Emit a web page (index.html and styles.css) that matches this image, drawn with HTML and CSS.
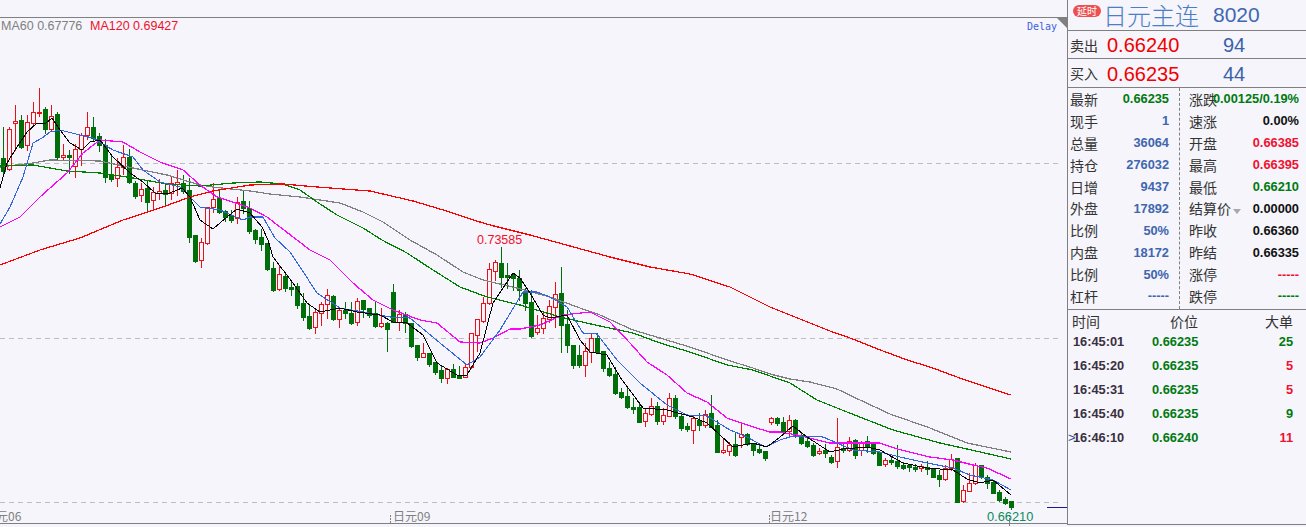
FILE: index.html
```html
<!DOCTYPE html>
<html lang="zh-CN">
<head>
<meta charset="utf-8">
<title>日元主连 8020</title>
<link rel="stylesheet" href="styles.css">
</head>
<body>
<div class="app">
  <section class="chart">
    <svg class="plot" id="plot" viewBox="0 0 1067 527" width="1067" height="527" xmlns="http://www.w3.org/2000/svg">
      <g class="rules">
        <line class="rule" x1="0" y1="17.5" x2="1067" y2="17.5"/>
        <line class="rule" x1="0" y1="523.5" x2="1067" y2="523.5"/>
        <line class="grid" x1="0" y1="163.5" x2="1061" y2="163.5"/>
        <line class="grid" x1="0" y1="338.5" x2="1061" y2="338.5"/>
        <line class="grid" x1="0" y1="502.5" x2="1061" y2="502.5"/>
        <line class="tick" x1="390.5" y1="515" x2="390.5" y2="523"/>
        <line class="tick" x1="769.5" y1="515" x2="769.5" y2="523"/>
        <line class="tick" x1="1009.5" y1="515" x2="1009.5" y2="527"/>
        <line class="navy" x1="1047" y1="507.5" x2="1067" y2="507.5"/>
        <polygon class="corner" points="1057,18 1067,18 1067,28"/>
      </g>
      <g id="candles"></g>
      <g id="lines" fill="none"></g>
      <text class="legend gray" x="1" y="30">MA60 0.67776</text>
      <text class="legend red" x="90" y="30">MA120 0.69427</text>
      <text class="delay" x="1027" y="30">Delay</text>
      <text class="legend red" x="477" y="244">0.73585</text>
      <text class="axis" x="-4" y="521">元06</text>
      <text class="axis" x="393" y="521">日元09</text>
      <text class="axis" x="770" y="521">日元12</text>
      <text class="axis-price" x="987" y="521">0.66210</text>
    </svg>
  </section>

  <aside class="panel">
    <header class="title">
      <span class="badge">延时</span>
      <span class="name">日元主连</span>
      <span class="code">8020</span>
    </header>
    <div class="quote">
      <span class="quote-label">卖出</span><span class="quote-price">0.66240</span><span class="quote-vol">94</span>
    </div>
    <div class="quote quote-tall">
      <span class="quote-label">买入</span><span class="quote-price">0.66235</span><span class="quote-vol">44</span>
    </div>
    <div class="stats">
      <div class="stats-col stats-left">
        <div class="stat"><span class="stat-label">最新</span><span class="num up">0.66235</span></div>
        <div class="stat"><span class="stat-label">现手</span><span class="num blue">1</span></div>
        <div class="stat"><span class="stat-label">总量</span><span class="num blue">36064</span></div>
        <div class="stat"><span class="stat-label">持仓</span><span class="num blue">276032</span></div>
        <div class="stat"><span class="stat-label">日增</span><span class="num blue">9437</span></div>
        <div class="stat"><span class="stat-label">外盘</span><span class="num blue">17892</span></div>
        <div class="stat"><span class="stat-label">比例</span><span class="num blue">50%</span></div>
        <div class="stat"><span class="stat-label">内盘</span><span class="num blue">18172</span></div>
        <div class="stat"><span class="stat-label">比例</span><span class="num blue">50%</span></div>
        <div class="stat"><span class="stat-label">杠杆</span><span class="num blue">-----</span></div>
      </div>
      <div class="stats-col stats-right">
        <div class="stat"><span class="stat-label tight">涨跌</span><span class="num up">0.00125/0.19%</span></div>
        <div class="stat"><span class="stat-label">速涨</span><span class="num ink">0.00%</span></div>
        <div class="stat"><span class="stat-label">开盘</span><span class="num down">0.66385</span></div>
        <div class="stat"><span class="stat-label">最高</span><span class="num down">0.66395</span></div>
        <div class="stat"><span class="stat-label">最低</span><span class="num up">0.66210</span></div>
        <div class="stat"><span class="stat-label">结算价<i class="caret"></i></span><span class="num ink">0.00000</span></div>
        <div class="stat"><span class="stat-label">昨收</span><span class="num ink">0.66360</span></div>
        <div class="stat"><span class="stat-label">昨结</span><span class="num ink">0.66335</span></div>
        <div class="stat"><span class="stat-label">涨停</span><span class="num down">-----</span></div>
        <div class="stat"><span class="stat-label">跌停</span><span class="num up">-----</span></div>
      </div>
    </div>
    <div class="trades">
      <div class="trade-head"><span>时间</span><span>价位</span><span>大单</span></div>
      <div class="trade"><span class="t-time">16:45:01</span><span class="t-price">0.66235</span><span class="t-vol up">25</span></div>
      <div class="trade"><span class="t-time">16:45:20</span><span class="t-price">0.66235</span><span class="t-vol down">5</span></div>
      <div class="trade"><span class="t-time">16:45:31</span><span class="t-price">0.66235</span><span class="t-vol down">5</span></div>
      <div class="trade"><span class="t-time">16:45:40</span><span class="t-price">0.66235</span><span class="t-vol up">9</span></div>
      <div class="trade current"><span class="t-time">16:46:10</span><span class="t-price">0.66240</span><span class="t-vol down">11</span></div>
    </div>
  </aside>
</div>
<script src="app.js"></script>
</body>
</html>
```
FILE: styles.css
```css
* { box-sizing: border-box; }
html, body { margin: 0; height: 100%; background: #f5f5fb; overflow: hidden; }
body { font-family: "Liberation Sans", "Noto Sans CJK SC", sans-serif; color: #222; }

.app { display: flex; width: 1306px; height: 527px; }
.chart { flex: 0 0 1067px; height: 527px; }
.plot { display: block; }

.rule { stroke: #808080; stroke-width: 1; }
.grid { stroke: #bdbdbd; stroke-width: 1; stroke-dasharray: 5 4; }
.tick { stroke: #808080; stroke-width: 1; stroke-dasharray: 2 1; }
.navy { stroke: #1a1a8c; stroke-width: 1; }
.corner { fill: #808080; }

.legend { font-family: "Liberation Sans", sans-serif; font-size: 12.5px; }
.legend.gray { fill: #808080; }
.legend.red { fill: #f0102c; }
.delay { font-family: "DejaVu Sans Mono", "Liberation Mono", monospace; font-size: 10px; fill: #3a62e0; }
.axis { font-family: "Noto Sans CJK SC", sans-serif; font-size: 12px; fill: #808080; }
.axis-price { font-family: "Liberation Sans", sans-serif; font-size: 12.8px; fill: #0b8a5a; }

.panel { flex: 0 0 239px; height: 525px; border-left: 1px solid #808080; border-bottom: 1px solid #808080; display: flex; flex-direction: column; }

.title { height: 31px; flex: none; border-bottom: 1px solid #808080; display: flex; align-items: flex-start; padding-left: 5px; }
.badge { width: 28px; height: 12px; margin-top: 5px; border-radius: 6px; background: #ee5050; color: #fff; font: 10px/12px "Noto Sans CJK SC", sans-serif; text-align: center; }
.name { margin-left: 2px; font: 300 24px/29px "Noto Sans CJK SC", sans-serif; color: #4a7fc4; }
.code { margin-left: 14px; font: 21px/29px "Liberation Sans", sans-serif; color: #4068b0; }

.quote { height: 28px; flex: none; border-bottom: 1px solid #808080; display: flex; align-items: center; padding: 2px 0 0 2px; }
.quote-tall { height: 29px; }
.quote-label { width: 37px; margin-top: -2px; font: 14px/20px "Noto Sans CJK SC", sans-serif; color: #333; }
.quote-price { width: 116px; font-size: 20px; color: #f00000; }
.quote-vol { font-size: 20px; color: #3a62a8; }

.stats { height: 222px; flex: none; border-bottom: 1px solid #808080; display: flex; }
.stats-col { display: flex; flex-direction: column; }
.stats-left { width: 112px; padding: 0 10px 0 2px; border-right: 1px dashed #808080; }
.stats-right { flex: 1; padding: 0 7px 0 9px; }
.stat { height: 21.9px; display: flex; align-items: center; white-space: nowrap; }
.stat-label { flex: none; font: 14px/20px "Noto Sans CJK SC", sans-serif; color: #333; }
.stat-label.tight { margin-right: -6px; }
.caret { display: inline-block; margin-left: 2px; border-style: solid; border-width: 5px 4.5px 0; border-color: #a8a8a8 transparent transparent; vertical-align: 0; }
.num { margin-left: auto; font-size: 12.8px; font-weight: 700; }
.up { color: #007a10; }
.down { color: #f01030; }
.blue { color: #3f66ae; }
.ink { color: #111; }

.trades { flex: 1; }
.trade-head { height: 19px; display: grid; grid-template-columns: 98px 95px 1fr; padding-left: 4px; font: 14px/22px "Noto Sans CJK SC", sans-serif; color: #333; }
.trade { height: 24px; display: grid; grid-template-columns: 79px 66px 1fr; align-items: center; padding-left: 5px; font-size: 12.8px; font-weight: 700; }
.t-time { color: #3a3040; }
.t-price { color: #007a10; }
.t-vol { justify-self: end; width: 38px; text-align: right; margin-right: 13px; }
.current { position: relative; }
.current::before { content: ">"; position: absolute; left: 0; font-weight: 400; color: #2a4fa0; }
```
FILE: app.js
```js
// [kind, bodyTop, bodyBottom, high, low]
const G = 0, R = 1;
const candles = [
[G,158,171,127,173],[R,129,169,127,170],[R,121,123,105,150],[G,120,147,115,148],[R,122,145,115,150],[R,112,123,102,124],[R,112,113,88,116],[G,109,129,107,133],[R,116,129,105,130],[G,114,157,112,159],
[R,155,157,144,160],[G,155,157,150,173],[R,149,166,144,177],[R,135,149,133,165],[R,127,135,112,139],[G,127,138,117,140],[G,136,145,133,151],[G,145,177,139,182],[G,175,179,154,181],[R,167,178,158,186],
[R,157,167,145,174],[G,157,182,149,183],[G,183,196,181,198],[R,189,195,183,201],[G,188,202,181,210],[R,192,200,187,208],[R,191,193,179,199],[G,190,194,183,204],[R,183,193,177,199],[R,182,184,170,195],
[G,183,191,175,193],[G,190,237,178,242],[G,235,261,235,262],[R,242,260,238,267],[R,207,243,207,244],[R,199,207,183,212],[G,198,212,190,213],[G,211,217,210,221],[G,215,220,210,222],[R,202,218,197,223],
[G,201,208,190,213],[G,208,231,201,233],[G,230,239,229,243],[G,237,244,229,250],[G,243,269,243,270],[G,268,290,262,291],[R,274,289,265,290],[G,276,288,272,291],[G,287,289,282,295],[G,286,305,283,308],
[G,303,317,293,320],[G,316,328,305,329],[R,312,327,308,333],[R,304,313,302,325],[R,295,304,289,318],[G,296,319,295,320],[R,310,319,307,327],[G,310,313,302,318],[G,313,323,302,324],[R,301,322,298,325],
[G,300,309,300,317],[G,308,315,308,317],[G,313,326,302,327],[R,323,326,308,327],[G,323,329,322,351],[G,292,322,284,322],[R,314,322,310,330],[G,314,323,312,332],[G,323,346,323,347],[G,345,357,345,360],
[R,353,357,343,357],[G,353,364,353,366],[G,362,372,362,374],[G,370,378,366,382],[R,369,378,368,383],[G,369,377,364,377],[G,376,378,366,378],[R,367,377,363,377],[R,333,367,333,368],[R,319,335,319,351],
[R,303,321,297,322],[R,269,303,263,304],[R,262,271,260,280],[G,263,277,247,287],[G,275,277,263,288],[G,275,278,273,290],[G,278,290,270,300],[G,293,303,288,310],[G,302,336,290,337],[R,328,332,315,334],
[R,318,328,313,333],[R,306,319,300,322],[R,294,307,282,327],[G,293,325,267,352],[G,324,345,310,352],[G,345,365,345,368],[G,355,365,345,367],[R,351,365,343,376],[R,338,352,333,362],[G,338,352,333,352],
[G,351,368,351,371],[G,368,375,362,376],[G,374,393,367,394],[G,392,397,388,398],[G,396,407,388,408],[G,407,409,398,413],[G,407,422,402,422],[R,413,421,408,426],[R,406,414,398,415],[G,406,421,402,424],
[R,415,421,408,424],[R,398,416,393,416],[G,398,416,395,418],[G,416,428,413,430],[G,426,429,423,431],[R,418,430,415,443],[G,420,425,413,430],[R,414,425,410,427],[G,413,427,395,427],[G,425,452,420,452],
[R,450,452,439,453],[R,445,451,442,455],[G,444,455,433,456],[R,434,437,423,447],[G,434,444,433,445],[G,443,450,443,455],[G,449,452,443,453],[G,451,458,451,460],[R,418,422,417,424],[G,418,423,417,425],
[G,422,432,417,433],[R,420,431,415,435],[G,420,435,419,437],[G,435,443,433,444],[G,441,446,438,447],[G,445,455,443,456],[R,451,453,448,454],[G,450,453,444,457],[G,457,462,455,463],[R,447,461,418,467],
[G,448,450,443,452],[R,441,450,437,451],[G,440,455,439,458],[R,442,450,441,455],[G,441,447,436,452],[G,444,453,443,454],[G,452,465,452,465],[R,460,464,458,466],[G,460,462,457,464],[G,461,466,445,468],
[G,465,468,462,469],[G,465,467,464,471],[G,467,469,464,471],[R,466,468,464,471],[G,467,469,461,474],[G,469,477,468,477],[G,475,479,470,486],[R,468,479,465,480],[R,459,468,454,470],[G,458,502,458,502],
[R,490,501,485,502],[R,483,491,473,491],[R,465,483,463,484],[G,465,477,465,478],[G,477,483,475,488],[G,482,493,480,493],[G,492,500,490,501],[G,499,503,497,504],[G,501,507,501,509]
];

const lines = [
 ["#808080",1.25,"0,167 33,163 50,160 100,161 133,168 167,175 200,185 213,187 250,191 270,194 300,197 340,203 363,212 383,222 410,240 437,255 463,272 483,280 517,288 550,297 580,308 600,315 633,330 660,338 693,348 727,360 753,368 770,374 790,379 810,382 837,389 860,400 890,414 930,428 967,443 1011,452"],
 ["#008000",1.25,"0,166 33,165 67,171 100,173 133,178 167,184 200,186 233,183 260,182 283,184 300,190 317,202 337,215 363,228 382,240 407,253 433,270 460,287 487,297 520,305 560,317 600,326 633,333 660,343 693,353 727,365 753,370 770,376 790,383 817,400 847,412 893,430 940,443 967,449 1011,459"],
 ["#ff0000",1.25,"0,265 40,250 80,238 123,220 160,208 190,197 213,191 250,185 283,184 317,187 370,191 413,201 450,212 470,219 490,225 530,235 570,246 610,257 650,267 690,274 730,287 770,307 790,315 830,331 850,338 883,351 910,361 930,367 957,377 983,386 1011,395"],
 ["#ff00ff",1.25,"0,227 20,217 40,197 67,173 83,153 100,140 123,142 140,152 160,162 183,170 200,185 217,197 233,202 250,208 267,217 297,240 310,250 330,260 353,283 373,300 393,310 420,320 437,323 460,342 480,343 493,338 510,329 520,329 540,325 563,315 590,312 610,322 630,343 647,362 667,375 687,393 707,402 727,418 753,427 770,432 780,432 797,435 830,443 880,443 897,449 930,457 953,460 973,465 987,468 1011,479"],
 ["#3366dd",1.1,"0,224 10,207 23,177 33,143 42,138 50,132 60,130 80,135 93,138 113,150 133,157 143,170 160,182 180,187 190,197 200,207 220,210 243,220 250,217 263,217 275,238 290,252 300,267 317,293 340,308 363,312 390,317 410,318 440,343 467,365 480,357 500,330 523,292 537,292 550,297 567,307 583,333 597,334 617,360 640,383 667,405 687,415 707,416 730,430 747,437 765,447 780,440 793,436 823,437 837,443 853,450 880,452 900,457 927,463 953,468 970,475 993,480 1011,490"],
 ["#000000",1,"0,188 7,163 17,147 27,132 37,123 45,124 52,118 60,130 70,143 82,150 90,142 100,140 113,157 130,173 143,182 155,193 170,193 182,188 190,197 200,220 213,229 227,217 237,209 250,213 262,227 268,240 273,257 283,270 293,283 307,303 320,312 340,308 357,312 380,315 393,322 407,323 423,335 437,363 457,375 467,375 480,353 493,303 513,273 520,278 530,293 543,315 550,318 567,315 580,340 590,352 607,355 620,377 637,400 643,408 667,410 693,417 707,423 733,447 753,443 767,447 780,437 793,426 807,437 830,452 843,449 867,447 880,450 903,463 927,468 953,470 967,479 980,483 993,480 1011,495"]
];

const NS = "http://www.w3.org/2000/svg";
const GREEN = "#006f0a", RED = "#ea1018", BG = "#f5f5fb";

function rect(parent, x, y, w, h, fill, stroke) {
  const r = document.createElementNS(NS, "rect");
  r.setAttribute("x", x); r.setAttribute("y", y);
  r.setAttribute("width", w); r.setAttribute("height", h);
  r.setAttribute("fill", fill);
  if (stroke) r.setAttribute("stroke", stroke);
  r.setAttribute("shape-rendering", "crispEdges");
  parent.appendChild(r);
}

const cg = document.getElementById("candles");
candles.forEach(([kind, top, bottom, high, low], i) => {
  const cx = 3 + 6 * i;
  const colour = kind === R ? RED : GREEN;
  rect(cg, cx, high, 1, low - high + 1, colour);
  if (kind === R) {
    rect(cg, cx - 2 + 0.5, top + 0.5, 4, Math.max(bottom - top, 1), BG, colour);
  } else {
    rect(cg, cx - 2, top, 5, bottom - top + 1, colour);
  }
});

const lg = document.getElementById("lines");
lines.forEach(([colour, width, pts]) => {
  const p = document.createElementNS(NS, "polyline");
  p.setAttribute("points", pts);
  p.setAttribute("stroke", colour);
  p.setAttribute("stroke-width", width);
  p.setAttribute("shape-rendering", "crispEdges");
  lg.appendChild(p);
});
```
